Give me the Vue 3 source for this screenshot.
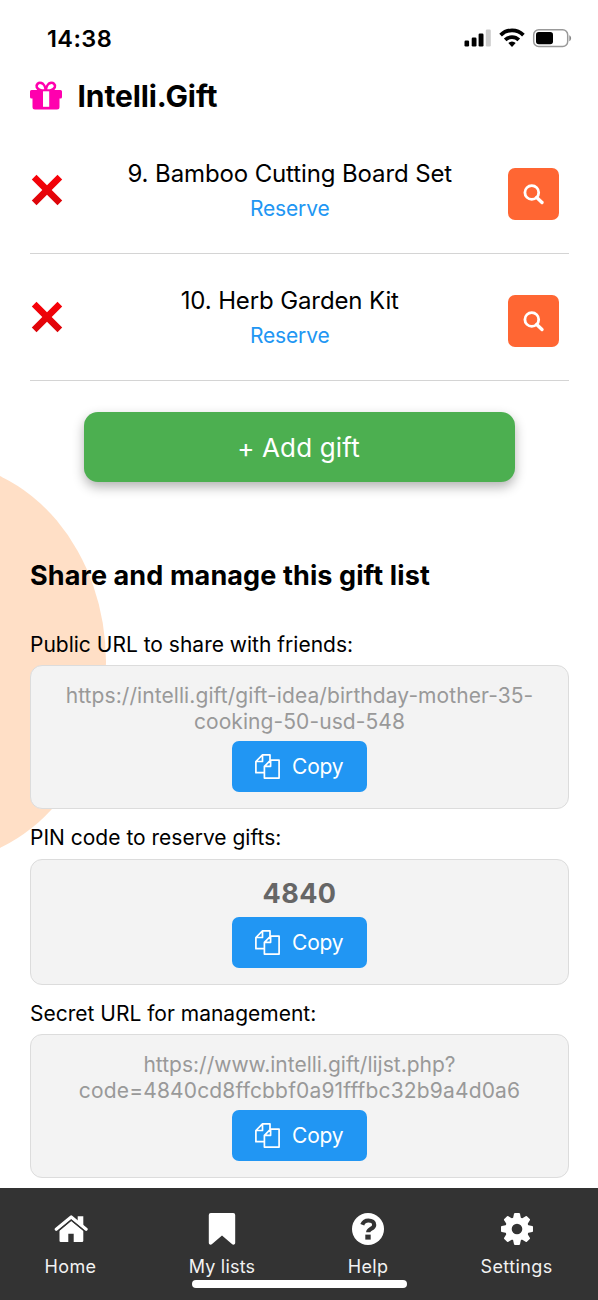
<script setup>
const gifts = [
  { id: 9, title: '9. Bamboo Cutting Board Set' },
  { id: 10, title: '10. Herb Garden Kit' },
]

const shares = [
  {
    label: 'Public URL to share with friends:',
    lines: ['https://intelli.gift/gift-idea/birthday-mother-35-', 'cooking-50-usd-548'],
    kind: 'url',
  },
  { label: 'PIN code to reserve gifts:', lines: ['4840'], kind: 'pin' },
  {
    label: 'Secret URL for management:',
    lines: ['https://www.intelli.gift/lijst.php?', 'code=4840cd8ffcbbf0a91fffbc32b9a4d0a6'],
    kind: 'url secret',
  },
]
</script>

<template>
  <div class="screen">
    <div class="blob"></div>

    <div class="status">
      <span class="time">14:38</span>
      <svg class="signals" width="108" height="22" viewBox="0 0 108 22">
        <g fill="#000">
          <rect x="0.5" y="12.5" width="4.6" height="6" rx="1.2" />
          <rect x="7.7" y="9.5" width="4.8" height="9" rx="1.2" />
          <rect x="14.6" y="5.5" width="4.9" height="13" rx="1.2" />
        </g>
        <rect x="21.8" y="1.5" width="5" height="17" rx="1.2" fill="#ccc" />
        <g fill="none" stroke="#000" stroke-width="3.7">
          <path d="M36.6 7.1a16 16 0 0 1 22.8 0" />
          <path d="M41.2 11.9a9.6 9.6 0 0 1 13.6 0" />
        </g>
        <path d="M48 18.9l-3.7-3.8a5.3 5.3 0 0 1 7.4 0z" fill="#000" />
        <rect x="69.700" y="1.700" width="34" height="16.800" rx="5" fill="#fff" stroke="#999" stroke-width="1.500" />
        <rect x="72" y="4" width="17" height="12.300" rx="2.800" fill="#000" />
        <path d="M105.300 7.300c2.400 1 2.400 4.900 0 5.900z" fill="#888" />
      </svg>
    </div>

    <header class="brand">
      <svg width="33" height="30" viewBox="0 0 33 30">
        <g fill="none" stroke="#ff00ae" stroke-width="2.600">
          <path d="M15.800 9.300C13 10 8 9.500 6.800 6.200 5.900 3.300 8.600 1.400 10.900 1.900c2.700.5 4.600 4.200 4.900 7.400z" />
          <path d="M15.800 9.300c2.800.7 7.800.2 9-3.100.9-2.900-1.800-4.800-4.100-4.300-2.700.5-4.600 4.200-4.900 7.400z" />
        </g>
        <path d="M1.500 9h29a1.500 1.500 0 0 1 1.500 1.500V16a1.500 1.500 0 0 1-1.500 1.500h-1V26a2.500 2.500 0 0 1-2.500 2.500H5A2.500 2.500 0 0 1 2.500 26v-8.500h-1A1.500 1.500 0 0 1 0 16v-5.500A1.500 1.500 0 0 1 1.500 9z" fill="#ff00ae" />
        <path d="M13 10.300h6.200v15.500H13z" fill="#fff" />
      </svg>
      <h1>Intelli.Gift</h1>
    </header>

    <main>
      <div v-for="gift in gifts" :key="gift.id" class="gift">
        <svg class="remove" width="32" height="32" viewBox="0 0 32 32">
          <defs>
            <linearGradient id="cross" x1="0" y1="0" x2="0" y2="32" gradientUnits="userSpaceOnUse">
              <stop offset="0" stop-color="#fb0008" />
              <stop offset="1" stop-color="#d9060a" />
            </linearGradient>
          </defs>
          <path d="M5.500.8L16 11.300 26.500.8l4.700 4.700L20.700 16l10.500 10.500-4.700 4.700L16 20.700 5.500 31.200.8 26.500 11.300 16 .8 5.500z" fill="url(#cross)" />
        </svg>
        <div class="gift-text">
          <div class="gift-title">{{ gift.title }}</div>
          <div class="reserve">Reserve</div>
        </div>
        <button class="search" aria-label="Search">
          <svg width="22" height="22" viewBox="0 0 22 22" fill="none" stroke="#fff">
            <circle cx="8.800" cy="9.500" r="6.900" stroke-width="2.800" />
            <path d="M13.700 14.500l5.300 5" stroke-width="3.400" stroke-linecap="round" />
          </svg>
        </button>
      </div>

      <button class="add">+ Add gift</button>

      <h2>Share and manage this gift list</h2>

      <section v-for="share in shares" :key="share.label" class="share">
        <div class="label">{{ share.label }}</div>
        <div class="box">
          <div :class="['value', share.kind]">
            <div v-for="line in share.lines" :key="line">{{ line }}</div>
          </div>
          <button class="copy">
            <svg width="25" height="25" viewBox="0 0 25 25" fill="none" stroke="#fff" stroke-width="1.700" stroke-linejoin="round">
              <path d="M9.200 18.700H.9V7.500L7.500.9H15v5.300M.9 7.500h6.600V.9" />
              <path d="M9.400 12.300L15.600 6.200h8.500v17.900H9.400zM9.400 12.300h6.200V6.200" />
            </svg>
            <span>Copy</span>
          </button>
        </div>
      </section>
    </main>

    <nav>
      <a class="tab home">
        <svg width="34" height="34" viewBox="0 0 34 34" fill="#fff">
          <path d="M5.500 18.800L17.200 8.900l12.100 9.900v10a1.200 1.200 0 0 1-1.200 1.200h-8.400v-8.200h-5.400V30H6.700a1.200 1.200 0 0 1-1.200-1.200z" />
          <path d="M23.700 4.200h5.600v11l-5.600-4.800z" />
          <path d="M2.300 17.300L17.200 5l14.900 12.300" fill="none" stroke="#fff" stroke-width="3.200" stroke-linecap="round" stroke-linejoin="round" />
          <path d="M4 19L17.200 8.100 30.400 19" fill="none" stroke="#333" stroke-width="1.100" />
        </svg>
        <span>Home</span>
      </a>
      <a class="tab lists">
        <svg width="34" height="34" viewBox="0 0 34 34">
          <path d="M5.800 1h22.400a2 2 0 0 1 2 2v28a1.800 1.800 0 0 1-3 1.200L17 23.400 6.800 32.200a1.800 1.800 0 0 1-3-1.200V3a2 2 0 0 1 2-2z" fill="#fff" />
        </svg>
        <span>My lists</span>
      </a>
      <a class="tab help">
        <svg width="34" height="34" viewBox="0 0 34 34">
          <circle cx="17" cy="17" r="16" fill="#fff" />
          <path d="M11.300 12.700c1-2.800 3.100-4.200 6.100-4.200 3.700 0 5.800 1.900 5.800 4.400 0 4-6 3.800-6 7.400" fill="none" stroke="#333" stroke-width="4.200" />
          <path d="M14.300 22.600h5.400v5h-5.400z" fill="#333" />
        </svg>
        <span>Help</span>
      </a>
      <a class="tab settings">
        <svg width="34" height="34" viewBox="0 0 34 34" fill="#fff">
          <g transform="translate(17 17)">
            <path v-for="n in 8" :key="n" :transform="`rotate(${n * 45})`" d="M-4.300 -9L-3 -15.200Q-2.800 -16 -2 -16H2Q2.800 -16 3 -15.200L4.300 -9z" />
            <circle r="11.800" />
            <circle r="5.300" fill="#333" />
          </g>
        </svg>
        <span>Settings</span>
      </a>
      <div class="indicator"></div>
    </nav>
  </div>
</template>

<style>
body {
  margin: 0;
  background: #fff;
}
</style>

<style scoped>
.screen {
  position: relative;
  width: 598px;
  height: 1300px;
  overflow: hidden;
  display: flex;
  flex-direction: column;
  background: #fff;
  color: #000;
  font-family: Inter, "Liberation Sans", sans-serif;
}
.blob {
  position: absolute;
  left: -230px;
  top: 462px;
  width: 336px;
  height: 400px;
  border-radius: 50%;
  background: #ffdfc6;
}
button {
  border: 0;
  padding: 0;
  font: inherit;
  color: #fff;
}
svg {
  display: block;
  flex: none;
}
h1,
h2 {
  margin: 0;
  font-weight: 700;
  white-space: nowrap;
}
.status {
  height: 76px;
  box-sizing: border-box;
  padding: 24px 26px 0 47px;
  display: flex;
  justify-content: space-between;
  align-items: flex-start;
}
.time {
  margin-top: 1px;
  font-size: 23.5px;
  line-height: 28px;
  font-weight: 600;
  letter-spacing: 0.4px;
}
.signals {
  margin-top: 4px;
}
.brand {
  height: 51px;
  display: flex;
  align-items: flex-start;
  padding: 4px 0 0 30px;
  box-sizing: border-box;
}
.brand svg {
  margin-top: 1px;
}
h1 {
  margin-left: 14.5px;
  font-size: 30px;
  line-height: 32px;
  letter-spacing: -0.1px;
}
main {
  position: relative;
  flex: 1;
  padding: 0 30px;
}
.gift {
  height: 127px;
  box-sizing: border-box;
  border-bottom: 1px solid #d4d4d4;
  display: flex;
  align-items: flex-start;
  margin-right: -1px;
}
.remove {
  margin: 47px 0 0 1px;
}
.gift-text {
  flex: 1;
  text-align: center;
  padding: 30px 0 0 8.5px;
  white-space: nowrap;
}
.gift-title {
  font-size: 24px;
  line-height: 34px;
  letter-spacing: -0.12px;
}
.reserve {
  font-size: 21px;
  line-height: 34px;
  margin-top: 1px;
  letter-spacing: -0.15px;
  color: #2196f3;
}
.search {
  width: 51px;
  height: 52px;
  margin: 41px 10px 0 0;
  border-radius: 7px;
  background: #ff6633;
  display: flex;
  align-items: center;
  justify-content: center;
}
.add {
  display: block;
  width: 431px;
  height: 70px;
  margin: 31px 0 0 54px;
  padding-right: 2px;
  border-radius: 14px;
  background: #4caf50;
  font-size: 26px;
  letter-spacing: 0.15px;
  box-shadow: 0 5px 12px rgba(0, 0, 0, 0.3);
}
h2 {
  margin: 77px 0 39px;
  font-size: 27px;
  line-height: 33px;
  letter-spacing: 0.1px;
}
.share {
  margin-bottom: 15px;
}
.label {
  padding-top: 1px;
  font-size: 21px;
  line-height: 26px;
}
.box {
  margin: 7.3px -1px 0 0;
  box-sizing: border-box;
  border: 1px solid #dcdcdc;
  border-radius: 12px;
  background: #f3f3f3;
  padding: 17px 0 16px;
  display: flex;
  flex-direction: column;
  align-items: center;
}
.value {
  text-align: center;
  white-space: nowrap;
}
.url {
  font-size: 21px;
  line-height: 26px;
  letter-spacing: 0.08px;
  color: #999;
}
.secret div:first-child {
  letter-spacing: 0;
}
.secret div:last-child {
  letter-spacing: 0.16px;
}
.pin {
  font-size: 27px;
  line-height: 33px;
  margin-bottom: 1px;
  font-weight: 700;
  letter-spacing: 0.4px;
  color: #666;
}
.copy {
  width: 135px;
  height: 51px;
  margin-top: 6px;
  border-radius: 7px;
  background: #2196f3;
  display: flex;
  align-items: center;
  padding-left: 23px;
  font-size: 21px;
  letter-spacing: -0.2px;
}
.copy span {
  margin: 0 0 0 12px;
}
nav {
  position: absolute;
  left: 0;
  right: 0;
  bottom: 0;
  height: 112.5px;
  background: #333;
  color: #f2f2f2;
  display: flex;
  align-items: flex-start;
}
.tab {
  flex: none;
  box-sizing: border-box;
  padding-top: 24px;
  display: flex;
  flex-direction: column;
  align-items: center;
  font-size: 18px;
  line-height: 24px;
  letter-spacing: 0.35px;
}
.tab span {
  margin-top: 9.5px;
}
.home {
  width: 141px;
}
.lists {
  width: 162px;
  letter-spacing: 0.2px;
}
.help {
  width: 130px;
}
.settings {
  width: 167px;
  letter-spacing: 0.4px;
}
.indicator {
  position: absolute;
  left: 192px;
  bottom: 12.5px;
  width: 215px;
  height: 8px;
  border-radius: 4px;
  background: #fff;
}
</style>
